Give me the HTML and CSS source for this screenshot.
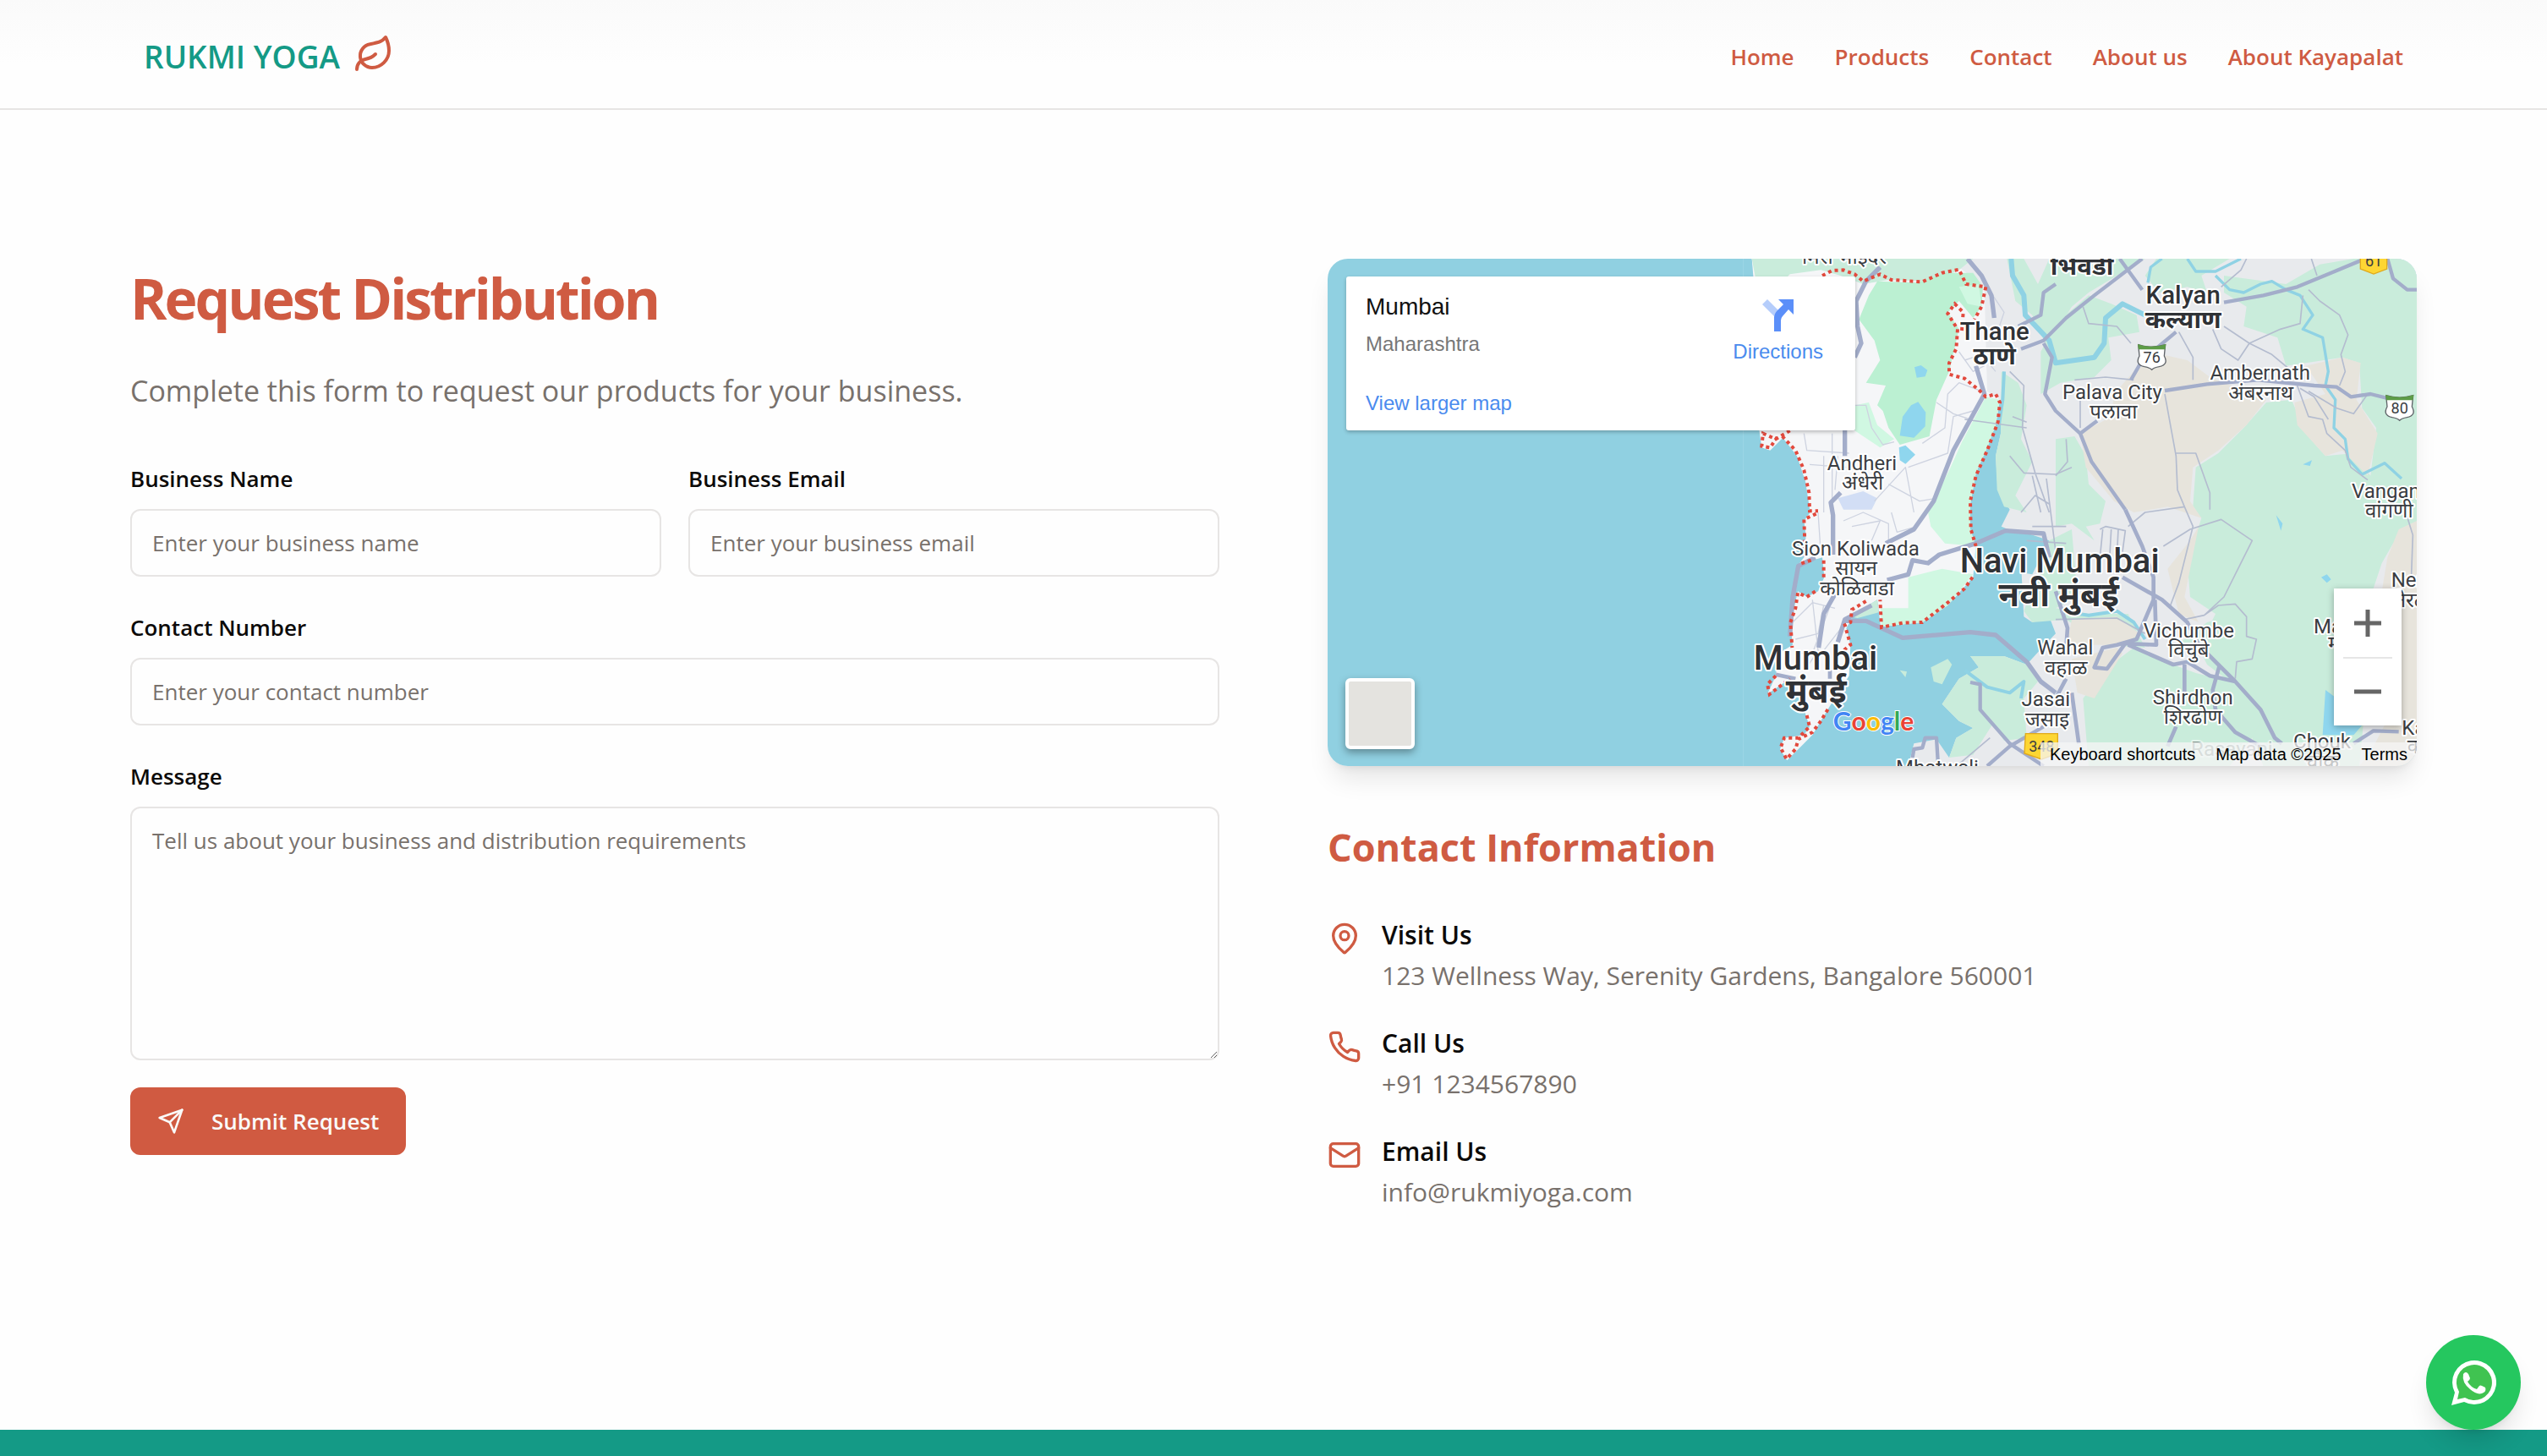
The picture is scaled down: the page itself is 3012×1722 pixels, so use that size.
FILE: index.html
```html
<!DOCTYPE html>
<html lang="en">
<head>
<meta charset="utf-8">
<meta name="viewport" content="width=device-width, initial-scale=1">
<title>Rukmi Yoga – Request Distribution</title>
<link rel="stylesheet" href="styles.css">
</head>
<body>
<header class="site-header">
  <div class="header-inner">
    <a class="brand" href="#home">
      <span>RUKMI YOGA</span>
      <svg class="icon brand-icon" viewBox="0 0 24 24" aria-hidden="true"><path d="M11 20A7 7 0 0 1 9.8 6.1C15.5 5 17 4.48 19 2c1 2 2 4.18 2 8 0 5.5-4.78 10-10 10Z"/><path d="M2 21c0-3 1.85-5.36 5.08-6C9.5 14.52 12 13 13 12"/></svg>
    </a>
    <nav class="main-nav" aria-label="Main">
      <a href="#home">Home</a>
      <a href="#products">Products</a>
      <a href="#contact">Contact</a>
      <a href="#about">About us</a>
      <a href="#kayapalat">About Kayapalat</a>
    </nav>
  </div>
</header>

<main class="page">
  <section class="request">
    <h1>Request Distribution</h1>
    <p class="lead">Complete this form to request our products for your business.</p>
    <form class="form">
      <div class="form-row">
        <div class="field">
          <label for="name">Business Name</label>
          <input id="name" type="text" placeholder="Enter your business name">
        </div>
        <div class="field">
          <label for="email">Business Email</label>
          <input id="email" type="email" placeholder="Enter your business email">
        </div>
      </div>
      <div class="field">
        <label for="phone">Contact Number</label>
        <input id="phone" type="tel" placeholder="Enter your contact number">
      </div>
      <div class="field">
        <label for="message">Message</label>
        <textarea id="message" placeholder="Tell us about your business and distribution requirements"></textarea>
      </div>
      <button class="submit" type="submit">
        <svg class="icon submit-icon" viewBox="0 0 24 24" aria-hidden="true"><path d="m22 2-7 20-4-9-9-4Z"/><path d="M22 2 11 13"/></svg>
        <span>Submit Request</span>
      </button>
    </form>
  </section>

  <section class="info">
    <div class="map">
      <svg class="map-canvas" viewBox="0 0 3864 1800" preserveAspectRatio="xMaxYMid slice" role="img" aria-label="Map of Mumbai">
        <rect width="3864" height="1800" fill="#90d0e1"/>
        <path d="M1475 0V1800" stroke="#a3d9e7" stroke-width="2"/>
        <!-- mainland -->
        <path fill="#e8eaed" d="M1505 0 1520 90 1560 200 2395 520 2388 620 2370 700 2378 820 2420 890 2390 950 2450 975 2462 1120 2470 1270 2500 1290 2560 1270 2583 1330 2530 1385 2480 1440 2400 1410 2280 1410 2310 1450 2240 1490 2180 1580 2240 1640 2290 1665 2230 1700 2205 1770 2160 1705 2080 1720 2060 1800H3864V0Z"/>
        <!-- city peninsula -->
        <path fill="#f5f6f8" d="M1505 0 1520 180 1530 600 1540 670 1570 680 1615 635 1665 700 1695 790 1712 900 1690 930 1697 980 1690 1060 1670 1085 1720 1070 1755 1060 1762 1130 1740 1180 1700 1200 1668 1180 1655 1240 1642 1300 1650 1370 1600 1400 1590 1480 1560 1545 1640 1490 1690 1600 1710 1660 1690 1690 1620 1700 1605 1740 1630 1780 1670 1740 1720 1690 1780 1590 1850 1480 1855 1370 1840 1310 1870 1260 1950 1210 1962 1305 2110 1290 2200 1230 2290 1130 2300 1020 2280 960 2280 870 2300 760 2340 670 2370 590 2385 500 2340 470 2330 100 2240 30 2200 0Z"/>
        <!-- parks and hills -->
        <g fill="#c9ecdb">
          <path d="M1505 0H2290L2240 40 2150 80 1990 75 1900 90 1820 60 1750 40 1640 55 1570 130 1520 80Z"/>
          <path d="M2410 0H2470L2520 90 2560 0H2900L2800 60 2700 120 2640 170 2583 260 2560 330 2500 200 2440 150Z"/>
          <path d="M2583 230 2700 130 2780 160 2870 200 2880 260 2770 280 2780 360 2720 420 2600 440 2530 480 2530 330Z"/>
          <path d="M2940 0H3200L3100 60 3120 120 3050 100 2950 120 2900 60Z"/>
          <path d="M3180 60 3400 90 3520 20 3640 0H3864V980L3780 1010 3740 1080 3700 1200 3780 1280 3700 1380 3660 1800H3320L3280 1700 3200 1500 3120 1440 3090 1380 3150 1260 3060 1200 3050 1080 3100 920 3070 880 3080 740 3160 690 3250 600 3330 510 3420 500 3470 620 3540 700 3640 690 3700 770 3720 600 3670 530 3660 370 3600 350 3400 380 3370 280 3250 240 3260 170 3180 120Z"/>
          <path d="M2390 400 2450 440 2480 520 2460 640 2500 720 2440 840 2480 900 2400 880 2375 820 2370 700 2388 620Z"/>
          <path d="M2583 640 2650 630 2690 700 2700 800 2760 860 2740 940 2690 950 2720 1000 2640 940 2583 950Z"/>
          <path d="M2560 1000 2640 960 2660 1200 2583 1240 2700 1260 2840 1260 2900 1380 2760 1370 2620 1280 2500 1290 2470 1250Z"/>
          <path d="M2680 1560 2780 1440 2860 1380 3000 1440 3080 1470 3200 1500 3320 1620 3280 1700 3200 1800H2700Z"/>
          <path d="M3000 1380 3120 1290 3240 1260 3400 1460 3420 1640 3300 1600 3160 1420Z"/>
          <path d="M2280 1410 2400 1410 2480 1440 2520 1500 2470 1560 2480 1700 2400 1710 2360 1650 2290 1760 2205 1770 2230 1700 2290 1665 2240 1640 2180 1580 2240 1490 2310 1450Z"/>
          <path d="M2140 1450 2200 1420 2215 1440 2180 1510 2150 1500ZM2030 1460 2055 1465 2050 1485Z"/>
          <path d="M1855 1270 1950 1210 1955 1255 1880 1275Z"/>
        </g>
        <!-- national park -->
        <path fill="#bbf0d2" d="M1920 130 1950 80 2090 85 2190 50 2290 50 2325 100 2320 170 2290 210 2240 150 2200 190 2240 250 2205 400 2160 500 2135 630 2030 660 1990 600 1970 540 1950 520 1980 450 1910 440 1960 360 1940 290 1885 215Z"/>
        <g fill="#d0f8e2">
          <path d="M1870 520 1920 510 1950 590 2010 640 1960 670 1870 610Z"/>
          <path d="M2335 490 2385 500 2370 590 2340 670 2300 760 2280 870 2280 960 2300 1020 2190 1010 2140 950 2130 900 2210 740 2250 650Z"/>
          <path d="M2060 1130 2180 1100 2290 1120 2200 1230 2110 1290 1965 1305 1962 1240 2060 1240Z"/>
          <path d="M2240 100 2310 90 2320 170 2270 160Z"/>
        </g>
        <!-- dry ground -->
        <g fill="#e7e4dc">
          <path d="M2860 400 2960 340 3050 360 3130 420 3330 500 3260 590 3160 680 3070 740 3060 860 3100 920 2980 880 2860 900 2790 860 2690 740 2670 620 2780 560 2790 480Z"/>
          <path d="M2640 1280 2800 1270 2880 1330 2830 1370 2720 1370 2620 1380Z"/>
          <path d="M3470 380 3600 350 3665 370 3650 500 3725 620 3690 770 3600 680 3540 700 3440 590 3430 510 3540 480Z"/>
          <path d="M3800 960 3864 930V1800H3660L3700 1750 3800 1560 3810 1300 3740 1180 3760 1060Z"/>
          <path d="M3060 1000 3090 950 3040 1200 3090 1290 3020 1260 2980 1100Z"/>
          <path d="M2640 1420 2800 1380 2820 1400 2720 1560 2660 1540Z"/>
        </g>
        <path fill="#d2def5" d="M1810 850 1900 825 1950 850 1930 890 1830 890Z"/>
        <!-- lakes -->
        <g fill="#8fd6ee">
          <path d="M2082 385 2105 378 2128 395 2120 418 2090 422ZM2070 520 2095 508 2122 545 2120 595 2080 635 2030 628 2040 560ZM2027 670 2050 662 2085 695 2050 728 2030 715Z"/>
          <path d="M3460 730 3492 715 3485 735ZM3365 910 3388 940 3382 965ZM3525 1130 3545 1120 3560 1138 3545 1150ZM3540 1530 3580 1560 3570 1655H3670L3640 1690H3530Z"/>
        </g>
        <path fill="#90d0e1" d="M2440 960 2560 1000 2500 1120 2440 1110Z"/>
        <!-- rivers -->
        <g fill="none" stroke="#8fd2e4" stroke-linejoin="round">
          <path stroke-width="18" d="M2425 0 2430 60 2470 130 2475 200 2560 290 2583 370 2720 350 2755 300 2760 210 2820 160 2900 200"/>
          <path stroke-width="10" d="M2910 85 2920 30 2960 0M3050 0 3080 45 3150 45 3240 0M3150 60 3200 110 3250 120 3310 90 3350 80 3400 110 3450 130 3495 200 3460 250 3530 280 3550 400 3540 450 3575 500 3570 600 3610 640 3620 710 3670 765 3750 725 3810 780"/>
          <path stroke-width="12" d="M2260 1460 2340 1520 2420 1540 2470 1500 2460 1560M2400 400 2395 500 2380 600M2600 1250 2700 1265 2800 1250 2860 1290 2900 1350"/>
        </g>
        <!-- small streets -->
        <g fill="none" stroke="#ced3e0" stroke-width="4" stroke-linejoin="round">
          <path d="M1690 620 1700 680 1850 690M1790 620 1790 900M1710 730 1840 740M1870 520 1910 520 1930 600 1970 660 2010 650M2110 655 2190 600 2200 480 2240 440 2320 470M2060 740 2200 690 2220 560 2290 540M2160 510 2220 550 2280 570M1940 860 2050 740 2080 900M1990 800 2100 860 2160 850M1760 700 1760 900M1810 700 1800 820M1740 900 1750 1050M1830 930 1900 900 1990 940 1990 1040M1860 950 1960 930 1930 1000M2000 900 2020 970 2090 950M1640 1300 1720 1220 1800 1240M1660 1350 1740 1330 1760 1230M1680 1400 1760 1390 1830 1300M1720 1210 1740 1390 1700 1450M1780 1240 1720 1400M2340 100 2400 190 2380 250M2240 330 2290 400 2330 380M2260 360 2320 340 2370 400"/>
        </g>
        <g fill="none" stroke="#b4bccf" stroke-width="5" stroke-linejoin="round">
          <path d="M2260 570 2480 600M2420 400 2470 450 2465 600 2510 760 2560 900M2430 560 2480 580M2420 700 2470 760 2583 765 2640 740M2500 770 2530 900M2460 900 2510 840 2560 870M2550 780 2583 1040M2500 950H2620M2480 1000 2620 1010M2740 960 2760 950 2830 965 2820 1040M2740 1060 2750 960M2780 960 2775 1050M2805 960 2800 1060"/>
          <path d="M2970 480 3010 700 3015 820 3040 880 3070 950 3020 1150 2990 1230M3010 690 3080 690 3130 830 3130 890M2840 950 2900 900 3040 880M2965 1020 3060 960 3170 925 3280 1000 3230 1100 3180 1200 3110 1265 3040 1280M3110 1265 3160 1230 3220 1225 3260 1270 3260 1340 3295 1350 3280 1420 3225 1430 3220 1490"/>
          <path d="M2680 170 2700 230 2800 240 2850 300M3020 260 3070 350 3070 430M3140 250 3170 320 3230 360 3270 300 3380 250 3450 230 3460 130M3180 240 3270 300 3350 340 3410 390M3170 100 3240 40 3260 0M3480 110 3520 150 3590 200 3620 270 3595 340 3610 400 3590 450M3490 0 3510 60M3480 470 3580 530 3640 550 3690 480M2650 430 2760 420 2860 430M2670 480 2670 600"/>
          <path d="M3440 450 3480 560 3530 570 3545 620 3610 680 3630 740 3690 785M3450 460 3500 490 3550 570M2583 1280 2800 1275 2900 1330M2620 640 2625 720 2583 770M2220 1810 2350 1700M3825 900 3850 980 3845 1120"/>
        </g>
        <!-- highways -->
        <g fill="none" stroke="#a3adca" stroke-linejoin="round">
          <path stroke-width="16" d="M1960 30 1910 80 1875 150 1880 240 1893 300 1870 350M1835 600 1835 700M1820 830 1785 865 1793 910V1050M1800 1190 1760 1260 1742 1380M2270 0 2320 60 2355 130 2365 210M2300 380 2330 480 2220 680 2150 860 2080 960 1980 1010M1985 1140 2060 1120 2075 1070 2130 1080 2170 1050 2300 1010 2405 965 2540 975 2560 1060M1730 1060 1670 1090 1650 1200 1640 1340M1810 1360 1835 1280 1930 1230M1840 1285 1910 1285 2040 1345 2280 1325 2370 1335 2480 1430 2530 1500 2583 1540"/>
          <path stroke-width="13" d="M2460 320 2540 290 2620 210 2720 130 2890 0M2583 90 2540 120 2530 200 2450 240M2810 0 2890 110M2540 300 2570 350 2545 480 2583 540 2670 620 2710 720 2830 890M2670 620 2730 575M2850 430 2890 360 3010 260M2970 468 3120 445 3300 430 3500 450 3580 455 3630 490 3700 480 3780 500M3180 155 3320 130 3440 100 3560 50 3680 0M3760 0 3780 70 3830 110H3864"/>
          <path stroke-width="14" d="M2830 890 2890 1020 2930 1130 2930 1210 2870 1350 2800 1370 2750 1380 2720 1450 2765 1455 2830 1365 2940 1370 2935 1210M2820 1130 2960 1210 3050 1290 3090 1370 3160 1440 3220 1500 3310 1600 3360 1700 3385 1720M2840 1370 3000 1440 3050 1430 3130 1480 3220 1500M3040 1440V1540M3165 1440 3140 1530 3150 1600 3220 1680 3310 1730M3010 1660 2980 1730M2583 1180 2625 1310 2620 1380M2620 1490 2583 1560M2640 1540 2665 1720"/>
          <path stroke-width="13" d="M2280 1503 2315 1510 2315 1600 2420 1720 2540 1800M2340 1800 2420 1730 2540 1660M2075 1770 2080 1740 2110 1735 2120 1700 2160 1700 2165 1780M3640 1720 3710 1675 3800 1678"/>
          <path stroke-width="14" d="M1590 1475 1660 1490M1782 1460V1490"/>
        </g>
        <!-- district boundary -->
        <g fill="none" stroke="#e2493d" stroke-width="12" stroke-dasharray="12 12">
          <path d="M1755 60 1790 42 1830 40 1870 55 1900 80 1960 55 2000 75 2110 82 2180 50 2240 38 2265 90 2335 100 2320 170 2295 215"/>
          <path d="M2250 255 2255 190 2225 160 2200 195 2235 250 2230 320 2205 370 2205 410 2260 425 2310 465 2335 490 2370 480 2385 510 2378 580 2340 680 2300 770 2280 860 2282 960 2300 1020M2288 1130 2260 1170 2200 1220 2110 1290 2040 1292 1965 1308 1960 1210"/>
          <path d="M1640 610 1590 640 1545 620 1540 665 1570 670 1600 625M1613 630 1660 680 1690 750 1708 830 1710 895 1740 895M1733 905 1690 925 1695 1060M1715 1070 1670 1085M1760 1070V1130M1730 1180 1700 1200 1668 1185 1660 1240 1642 1290 1648 1380M1910 1215 1860 1245 1855 1290 1835 1300 1855 1370 1830 1390M1590 1480 1560 1510 1568 1545 1640 1490M1700 1620 1710 1660 1670 1700 1620 1700 1607 1735 1628 1775 1660 1740 1670 1705 1720 1680 1750 1640 1780 1590"/>
        </g>
        <!-- place names -->
        <g class="place place-sm">
          <text lang="mr" x="1833" y="18">मिरा भाईंदर</text>
          <text x="1896" y="750">Andheri</text><text lang="mr" x="1898" y="818">अंधेरी</text>
          <text x="1873" y="1053">Sion Koliwada</text><text lang="mr" x="1875" y="1122">सायन</text><text lang="mr" x="1878" y="1195">कोळिवाडा</text>
          <text x="2784" y="498">Palava City</text><text lang="mr" x="2788" y="568">पलावा</text>
          <text x="3308" y="430">Ambernath</text><text lang="mr" x="3311" y="500">अंबरनाथ</text>
          <text x="2617" y="1403">Wahal</text><text lang="mr" x="2620" y="1475">वहाळ</text>
          <text x="3055" y="1343">Vichumbe</text><text lang="mr" x="3055" y="1412">विचुंबे</text>
          <text x="3070" y="1580">Shirdhon</text><text lang="mr" x="3070" y="1650">शिरढोण</text>
          <text x="2548" y="1588">Jasai</text><text lang="mr" x="2553" y="1660">जसाइ</text>
          <text x="2163" y="1830">Mhatwali</text>
          <text x="3208" y="1763" opacity=".5">Rasayani</text>
          <text x="3528" y="1738">Chouk</text><text lang="mr" x="3528" y="1810">चौक</text>
        </g>
        <g class="place place-sm place-start">
          <text x="3633" y="848">Vangani</text><text lang="mr" x="3681" y="918">वांगणी</text>
          <text x="3773" y="1165">Neral</text><text lang="mr" x="3785" y="1235">नेरळ</text>
          <text x="3498" y="1328">Mape</text><text lang="mr" x="3550" y="1390">मापे</text>
          <text x="3811" y="1690">Karjat</text><text lang="mr" x="3830" y="1755">कर्जत</text>
        </g>
        <g class="place place-md">
          <text x="2366" y="288">Thane</text><text lang="mr" x="2366" y="375">ठाणे</text>
          <text x="3035" y="158">Kalyan</text><text lang="mr" x="3035" y="247">कल्याण</text>
          <text lang="mr" x="2676" y="58">भिवंडी</text>
        </g>
        <g class="place place-lg">
          <text x="1731" y="1458">Mumbai</text><text lang="mr" x="1733" y="1575">मुंबई</text>
          <text x="2597" y="1113">Navi Mumbai</text><text lang="mr" x="2594" y="1232">नवी मुंबई</text>
        </g>
        <!-- road shields -->
        <g class="shield">
          <path fill="#fff" stroke="#5f6368" stroke-width="4" d="M2876 305Q2924 320 2972 305L2968 345Q2985 375 2950 383 2932 386 2924 394 2916 386 2898 383 2863 375 2880 345Z"/>
          <path fill="#5d9c47" d="M2874 303Q2924 320 2974 303L2971 322H2877Z"/>
          <text x="2924" y="370">76</text>
          <path fill="#fff" stroke="#5f6368" stroke-width="4" d="M3755 485Q3803 500 3851 485L3847 525Q3864 555 3829 563 3811 566 3803 574 3795 566 3777 563 3742 555 3759 525Z"/>
          <path fill="#5d9c47" d="M3753 483Q3803 500 3853 483L3850 502H3756Z"/>
          <text x="3803" y="550">80</text>
          <path fill="#fdd633" stroke="#e0a91c" stroke-width="4" d="M3664 -40H3758V36L3711 54 3664 36Z"/>
          <text x="3711" y="28">61</text>
          <path fill="#fdd633" stroke="#e0a91c" stroke-width="4" d="M2476 1685H2590V1755L2533 1776 2472 1755Z"/>
          <text x="2533" y="1750">348</text>
        </g>
        <text class="google" x="1793" y="1674"><tspan fill="#4285f4">G</tspan><tspan fill="#ea4335">o</tspan><tspan fill="#fbbc05">o</tspan><tspan fill="#4285f4">g</tspan><tspan fill="#34a853">l</tspan><tspan fill="#ea4335">e</tspan></text>
      </svg>

      <div class="place-card">
        <div class="place-text">
          <div class="place-name">Mumbai</div>
          <div class="place-region">Maharashtra</div>
          <a class="place-larger" href="#map">View larger map</a>
        </div>
        <a class="directions" href="#directions">
          <svg class="directions-icon" viewBox="0 0 38 38" aria-hidden="true"><path fill="#b5cdfb" d="M0 6 6 0 20 14 14 20Z"/><path fill="#5b8ff9" d="M14 38V22Q14 17 18 13L25 6 19 0H37V18L31 12 24 20Q22 22 22 25V38Z"/></svg>
          <span>Directions</span>
        </a>
      </div>

      <button class="layer-toggle" type="button" aria-label="Show satellite imagery"></button>
      <div class="zoom-control">
        <button type="button" aria-label="Zoom in"><svg viewBox="0 0 32 32" aria-hidden="true"><path d="M16 0V32M0 16H32"/></svg></button>
        <button type="button" aria-label="Zoom out"><svg viewBox="0 0 32 32" aria-hidden="true"><path d="M0 16H32"/></svg></button>
      </div>
      <div class="attribution">
        <a href="#shortcuts">Keyboard shortcuts</a>
        <span>Map data ©2025</span>
        <a href="#terms">Terms</a>
      </div>
    </div>

    <h2>Contact Information</h2>
    <ul class="contacts">
      <li>
        <svg class="icon contact-icon" viewBox="0 0 24 24" aria-hidden="true"><path d="M20 10c0 4.993-5.539 10.193-7.399 11.799a1 1 0 0 1-1.202 0C9.539 20.193 4 14.993 4 10a8 8 0 0 1 16 0"/><circle cx="12" cy="10" r="3"/></svg>
        <div><h3>Visit Us</h3><p>123 Wellness Way, Serenity Gardens, Bangalore 560001</p></div>
      </li>
      <li>
        <svg class="icon contact-icon" viewBox="0 0 24 24" aria-hidden="true"><path d="M22 16.92v3a2 2 0 0 1-2.18 2 19.79 19.79 0 0 1-8.63-3.07 19.5 19.5 0 0 1-6-6 19.79 19.79 0 0 1-3.07-8.67A2 2 0 0 1 4.11 2h3a2 2 0 0 1 2 1.72 12.84 12.84 0 0 0 .7 2.81 2 2 0 0 1-.45 2.11L8.09 9.91a16 16 0 0 0 6 6l1.27-1.27a2 2 0 0 1 2.11-.45 12.84 12.84 0 0 0 2.81.7A2 2 0 0 1 22 16.92z"/></svg>
        <div><h3>Call Us</h3><p>+91 1234567890</p></div>
      </li>
      <li>
        <svg class="icon contact-icon" viewBox="0 0 24 24" aria-hidden="true"><rect width="20" height="16" x="2" y="4" rx="2"/><path d="m22 7-8.97 5.7a1.94 1.94 0 0 1-2.06 0L2 7"/></svg>
        <div><h3>Email Us</h3><p>info@rukmiyoga.com</p></div>
      </li>
    </ul>
  </section>
</main>

<footer class="site-footer"></footer>

<a class="whatsapp" href="#whatsapp" aria-label="Chat on WhatsApp">
  <svg viewBox="0 0 54 54" aria-hidden="true"><path fill="#fff" d="M1 54 5 39A26 26 0 1 1 16 50Z"/><path fill="#40c351" d="M8 47 10 38A21 21 0 1 1 17 45Z"/><path fill="#fff" d="M15 17Q18 13 21 17L23 22Q23 24 20 26 24 33 31 35L34 31Q35 30 37 31L41 33Q43 38 37 40 31 42 23 35 13 27 15 17Z"/></svg>
</a>
</body>
</html>
```
FILE: styles.css
```css
:root {
  --primary: #cf5b42;
  --teal: #149a86;
  --ink: #0c0a09;
  --muted: #78716c;
  --line: #e7e5e4;
}

* { box-sizing: border-box; }

body {
  margin: 0;
  min-height: 100vh;
  display: flex;
  flex-direction: column;
  background: #fefefe;
  color: var(--ink);
  font-family: "Open Sans", "Noto Sans", sans-serif;
  font-size: 30px;
  line-height: 48px;
}

h1, h2, h3, p, ul { margin: 0; padding: 0; }
a { text-decoration: none; color: inherit; }
button, input, textarea { font: inherit; }

.icon {
  fill: none;
  stroke: currentColor;
  stroke-width: 2;
  stroke-linecap: round;
  stroke-linejoin: round;
  flex: none;
}

/* Header */
.site-header {
  background: linear-gradient(#fafafa, #fefefe 60%);
  border-bottom: 2px solid var(--line);
}
.header-inner {
  max-width: 2800px;
  margin: 0 auto;
  padding: 43px 64px 37px;
  display: flex;
  align-items: center;
  justify-content: space-between;
}
.brand {
  display: flex;
  align-items: center;
  gap: 16px;
  color: var(--teal);
  font-size: 37px;
  font-weight: 600;
}
.brand-icon { width: 48px; height: 48px; margin-top: -6px; color: var(--primary); }
.main-nav {
  display: flex;
  align-items: center;
  gap: 48px;
  color: var(--primary);
  font-size: 26px;
  font-weight: 600;
}

/* Page */
.page {
  width: 100%;
  max-width: 2800px;
  margin: 0 auto;
  padding: 176px 48px 0;
  flex: 1;
  display: grid;
  grid-template-columns: 1fr 1fr;
  gap: 128px;
}
h1 {
  color: var(--primary);
  font-size: 66px;
  font-weight: 700;
  line-height: 92px;
  letter-spacing: -3px;
}
.lead {
  margin-top: 36px;
  color: var(--muted);
  font-size: 34px;
  line-height: 56px;
}

/* Form */
.form { display: flex; flex-direction: column; gap: 40px; margin-top: 56px; }
.form-row { display: grid; grid-template-columns: 1fr 1fr; gap: 32px; }
.field { display: flex; flex-direction: column; gap: 16px; }
.field label { font-size: 26px; font-weight: 600; line-height: 40px; }
.field input,
.field textarea {
  width: 100%;
  height: 80px;
  padding: 0 24px;
  border: 2px solid var(--line);
  border-radius: 12px;
  background: transparent;
  color: var(--ink);
  font-size: 26px;
  line-height: 40px;
}
.field textarea { display: block; height: 300px; padding: 18px 24px; resize: vertical; }
.field ::placeholder { color: var(--muted); opacity: 1; }
.submit {
  align-self: flex-start;
  display: flex;
  align-items: center;
  gap: 32px;
  height: 80px;
  margin-top: -8px;
  padding: 0 32px;
  border: 0;
  border-radius: 12px;
  background: #d05a41;
  color: #fafaf9;
  font-size: 26px;
  font-weight: 600;
}
.submit-icon { width: 32px; height: 32px; }

/* Map */
.map {
  position: relative;
  height: 600px;
  border-radius: 24px;
  overflow: hidden;
  box-shadow: 0 20px 30px -6px rgba(0, 0, 0, .1), 0 8px 12px -8px rgba(0, 0, 0, .1);
  font-family: "Liberation Sans", Arial, sans-serif;
  font-size: 24px;
  line-height: 32px;
}
.map-canvas { display: block; width: 100%; height: 100%; }
.place {
  fill: #3a3d42;
  stroke: #fff;
  stroke-width: 12px;
  stroke-linejoin: round;
  paint-order: stroke;
  text-anchor: middle;
  font-family: Roboto, "Noto Sans", sans-serif;
}
.place-sm { font-size: 72px; }
.place-start { text-anchor: start; }
.place-md { font-size: 88px; font-weight: 500; fill: #2f3236; }
.place-lg { font-size: 120px; font-weight: 500; fill: #2f3236; }
.place-md [lang="mr"],
.place-lg [lang="mr"] { font-weight: 700; }
.shield text {
  fill: #3a3d42;
  font-family: Roboto, sans-serif;
  font-size: 54px;
  text-anchor: middle;
}
.google {
  font-family: Lato, sans-serif;
  font-size: 90px;
  font-weight: 700;
  stroke: #fff;
  stroke-width: 6px;
  paint-order: stroke;
}
.place-card {
  position: absolute;
  top: 21px;
  left: 22px;
  width: 602px;
  height: 182px;
  padding: 20px 38px 0 23px;
  display: flex;
  justify-content: space-between;
  align-items: flex-start;
  background: #fff;
  border-radius: 3px;
  box-shadow: 0 2px 4px rgba(0, 0, 0, .25);
}
.place-text { display: flex; flex-direction: column; }
.place-name { font-size: 28px; color: #111; }
.place-region { margin-top: 12px; color: #777; }
.place-larger { margin-top: 38px; color: #4a8bee; }
.directions {
  display: flex;
  flex-direction: column;
  align-items: center;
  gap: 8px;
  padding-top: 7px;
  color: #4a8bee;
}
.directions-icon { width: 38px; height: 38px; }
.layer-toggle {
  position: absolute;
  left: 21px;
  bottom: 20px;
  width: 82px;
  height: 84px;
  padding: 0;
  border: 4px solid #fff;
  border-radius: 6px;
  background: #e4e3df;
  box-shadow: 0 4px 10px rgba(0, 0, 0, .35);
}
.zoom-control {
  position: absolute;
  right: 18px;
  bottom: 48px;
  width: 80px;
  display: flex;
  flex-direction: column;
  background: #fff;
  box-shadow: 0 2px 8px rgba(0, 0, 0, .3);
}
.zoom-control button {
  height: 81px;
  padding: 0;
  border: 0;
  background: none;
  display: grid;
  place-items: center;
}
.zoom-control button + button { background: linear-gradient(#e6e6e6, #e6e6e6) center top / 58px 2px no-repeat; }
.zoom-control svg { width: 32px; height: 32px; fill: none; stroke: #666; stroke-width: 5; }
.attribution {
  position: absolute;
  right: 0;
  bottom: 0;
  height: 28px;
  padding: 0 11px;
  display: flex;
  align-items: center;
  gap: 24px;
  background: rgba(245, 245, 245, .75);
  color: #000;
  font-size: 20px;
  line-height: 28px;
}

/* Contact information */
h2 {
  margin-top: 64px;
  color: var(--primary);
  font-size: 45px;
  line-height: 64px;
}
.contacts {
  margin-top: 48px;
  display: flex;
  flex-direction: column;
  gap: 32px;
  list-style: none;
}
.contacts li { display: flex; gap: 24px; }
.contact-icon { width: 40px; height: 40px; margin-top: 8px; color: var(--primary); }
.contacts h3 { font-size: 30px; font-weight: 600; line-height: 48px; }
.contacts p { color: var(--muted); }

.site-footer { height: 31px; background: var(--teal); }

.whatsapp {
  position: fixed;
  right: 31px;
  bottom: 31px;
  width: 112px;
  height: 112px;
  border-radius: 50%;
  display: grid;
  place-items: center;
  background: #25c75f;
  box-shadow: 0 20px 30px -6px rgba(0, 0, 0, .12), 0 8px 12px -8px rgba(0, 0, 0, .12);
}
.whatsapp svg { width: 54px; height: 54px; }
```
